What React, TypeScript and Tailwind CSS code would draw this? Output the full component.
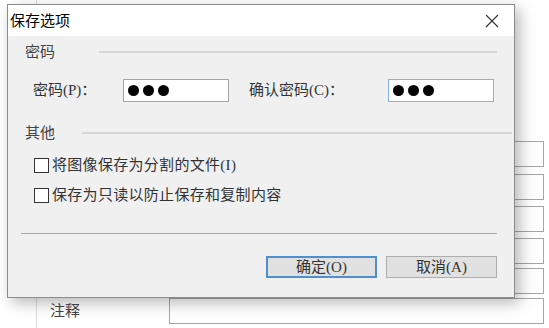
import React from "react";

const body = {
  fontFamily: '"Liberation Serif", "Noto Sans CJK SC", serif',
};

function Dots() {
  return (
    <div className="flex items-center gap-[4px]">
      <span className="w-[11px] h-[11px] rounded-full bg-black" />
      <span className="w-[11px] h-[11px] rounded-full bg-black" />
      <span className="w-[11px] h-[11px] rounded-full bg-black" />
    </div>
  );
}

function Check({ label }: { label: string }) {
  return (
    <div className="flex items-center h-[20px] pl-[26px]">
      <span className="w-[15px] h-[15px] border border-[#333] bg-white" />
      <span className="ml-[3px] text-[15px] text-[#333] tracking-[0.3px] leading-none">{label}</span>
    </div>
  );
}

export default function App() {
  return (
    <div className="relative w-[549px] h-[328px] overflow-hidden bg-white" style={body}>
      {/* background page */}
      <div className="ml-[36px] h-full border-l border-[#dcdcdc] pt-[141px] flex flex-col items-end pr-[5px]">
        <div className="w-[375px] h-[26px] border border-[#a6a6a6] bg-white" />
        <div className="w-[375px] h-[26px] border border-[#a6a6a6] bg-white mt-[7px]" />
        <div className="w-[375px] h-[26px] border border-[#a6a6a6] bg-white mt-[6px]" />
        <div className="w-[375px] h-[26px] border border-[#a6a6a6] bg-white mt-[6px]" />
        <div className="w-[375px] h-[26px] border border-[#a6a6a6] bg-white mt-[4px]" />
        <div className="self-stretch flex items-center mt-[4px]">
          <span className="ml-[13px] text-[15px] text-[#444]">注释</span>
          <div className="ml-auto w-[375px] h-[26px] border border-[#a6a6a6] bg-white" />
        </div>
      </div>

      {/* dialog */}
      <div className="absolute left-[7px] top-[4px] w-[508px] h-[294px] border border-[#8c8c8c] bg-[#f0f0f0] shadow-[5px_5px_14px_rgba(0,0,0,0.28)] flex flex-col">
        <div className="h-[31px] bg-white flex items-center justify-between shrink-0">
          <span className="pl-[2px] text-[15px] text-black" style={{ fontFamily: '"Noto Sans CJK SC", sans-serif' }}>
            保存选项
          </span>
          <svg width="14" height="14" viewBox="0 0 14 14" className="mr-[15px]">
            <path d="M1 1 L13 13 M13 1 L1 13" stroke="#333" strokeWidth="1.1" fill="none" />
          </svg>
        </div>

        <div className="flex flex-col">
          {/* group 密码 */}
          <div className="flex items-center h-[20px] mt-[6px] pl-[17px] pr-[17px]">
            <span className="text-[15px] text-[#444] leading-none">密码</span>
            <div className="ml-[44px] flex-1 border-t-2 border-[#d6d6d6]" />
          </div>

          <div className="flex items-center mt-[17px] pl-[25px] h-[23px]">
            <span className="w-[90px] text-[15px] text-[#333] leading-none">密码(P)：</span>
            <div className="w-[106px] h-[23px] border border-[#a5a5a5] bg-white flex items-center pl-[4px]">
              <Dots />
            </div>
            <span className="ml-[20px] w-[139px] text-[15px] text-[#333] leading-none">确认密码(C)：</span>
            <div className="w-[106px] h-[23px] border border-[#7eb4ea] bg-white flex items-center pl-[4px]">
              <Dots />
            </div>
          </div>

          {/* group 其他 */}
          <div className="flex items-center h-[20px] mt-[21px] pl-[17px] pr-[2px]">
            <span className="text-[15px] text-[#444] leading-none">其他</span>
            <div className="ml-[27px] flex-1 border-t-2 border-[#d6d6d6]" />
          </div>

          <div className="mt-[12px]">
            <Check label="将图像保存为分割的文件(I)" />
          </div>
          <div className="mt-[10px]">
            <Check label="保存为只读以防止保存和复制内容" />
          </div>

          <div className="mt-[28px] ml-[13px] mr-[17px] border-t border-[#a8a8a8]" />

          <div className="flex justify-end gap-[9px] mt-[22px] pr-[17px]">
            <div className="w-[111px] h-[22px] border-2 border-[#4f8fd0] bg-[#e1e1e1] flex items-center justify-center text-[15px] text-[#333] leading-none">
              确定(O)
            </div>
            <div className="w-[111px] h-[22px] border border-[#adadad] bg-[#e1e1e1] flex items-center justify-center text-[15px] text-[#333] leading-none">
              取消(A)
            </div>
          </div>
        </div>
      </div>
    </div>
  );
}
